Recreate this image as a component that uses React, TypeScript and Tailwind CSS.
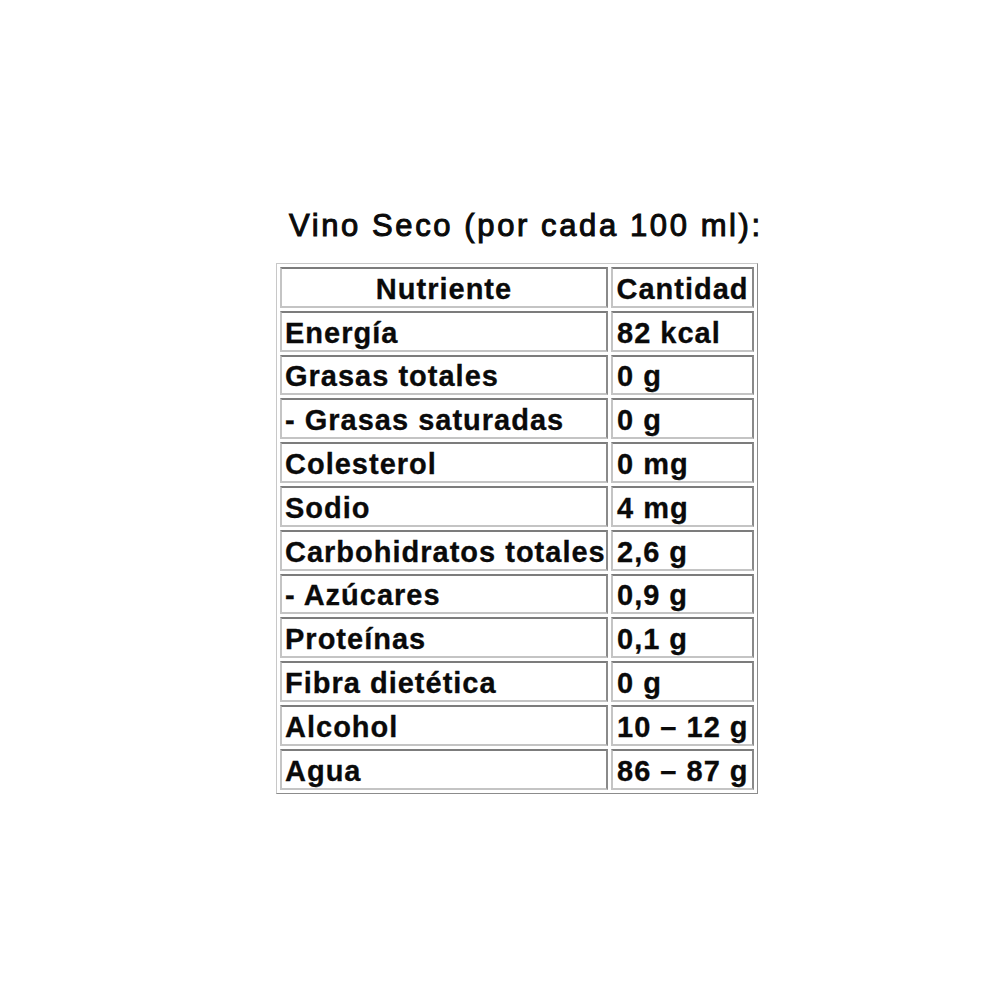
import React from 'react';

const rows: [string, string][] = [
  ['Energía', '82 kcal'],
  ['Grasas totales', '0 g'],
  ['- Grasas saturadas', '0 g'],
  ['Colesterol', '0 mg'],
  ['Sodio', '4 mg'],
  ['Carbohidratos totales', '2,6 g'],
  ['- Azúcares', '0,9 g'],
  ['Proteínas', '0,1 g'],
  ['Fibra dietética', '0 g'],
  ['Alcohol', '10 – 12 g'],
  ['Agua', '86 – 87 g'],
];

const cell =
  'h-[40.8px] p-0 pt-[4px] leading-none border-2 border-t-[#7c7c7c] border-r-[#8a8a8a] border-b-[#c4c4c4] border-l-[#c4c4c4] bg-white align-middle whitespace-nowrap';

const App: React.FC = () => {
  return (
    <div className="w-[1000px] h-[1000px] bg-white text-[#0a0a0a] font-['Liberation_Sans',Arial,sans-serif]">
      <div className="pt-[208px] pl-[276px]">
        <h2 className="pl-[13px] text-[31px] leading-[36px] font-normal tracking-[2.6px] mb-[19px] [-webkit-text-stroke:1px_#0a0a0a]">
          Vino Seco (por cada 100 ml):
        </h2>
        <table className="border-separate border-spacing-[3px] border border-t-[#c8c8c8] border-l-[#c8c8c8] border-r-[#8c8c8c] border-b-[#8c8c8c] text-[29px] leading-none font-bold tracking-[1px] [-webkit-text-stroke:0.3px_#0a0a0a]">
          <thead>
            <tr>
              <th className={`${cell} w-[328px] text-center`}>Nutriente</th>
              <th className={`${cell} w-[143px] text-center`}>Cantidad</th>
            </tr>
          </thead>
          <tbody>
            {rows.map(([name, amount]) => (
              <tr key={name}>
                <td className={`${cell} pl-[3px] text-left`}>{name}</td>
                <td className={`${cell} pl-[4px] text-left`}>{amount}</td>
              </tr>
            ))}
          </tbody>
        </table>
      </div>
    </div>
  );
};

export default App;
